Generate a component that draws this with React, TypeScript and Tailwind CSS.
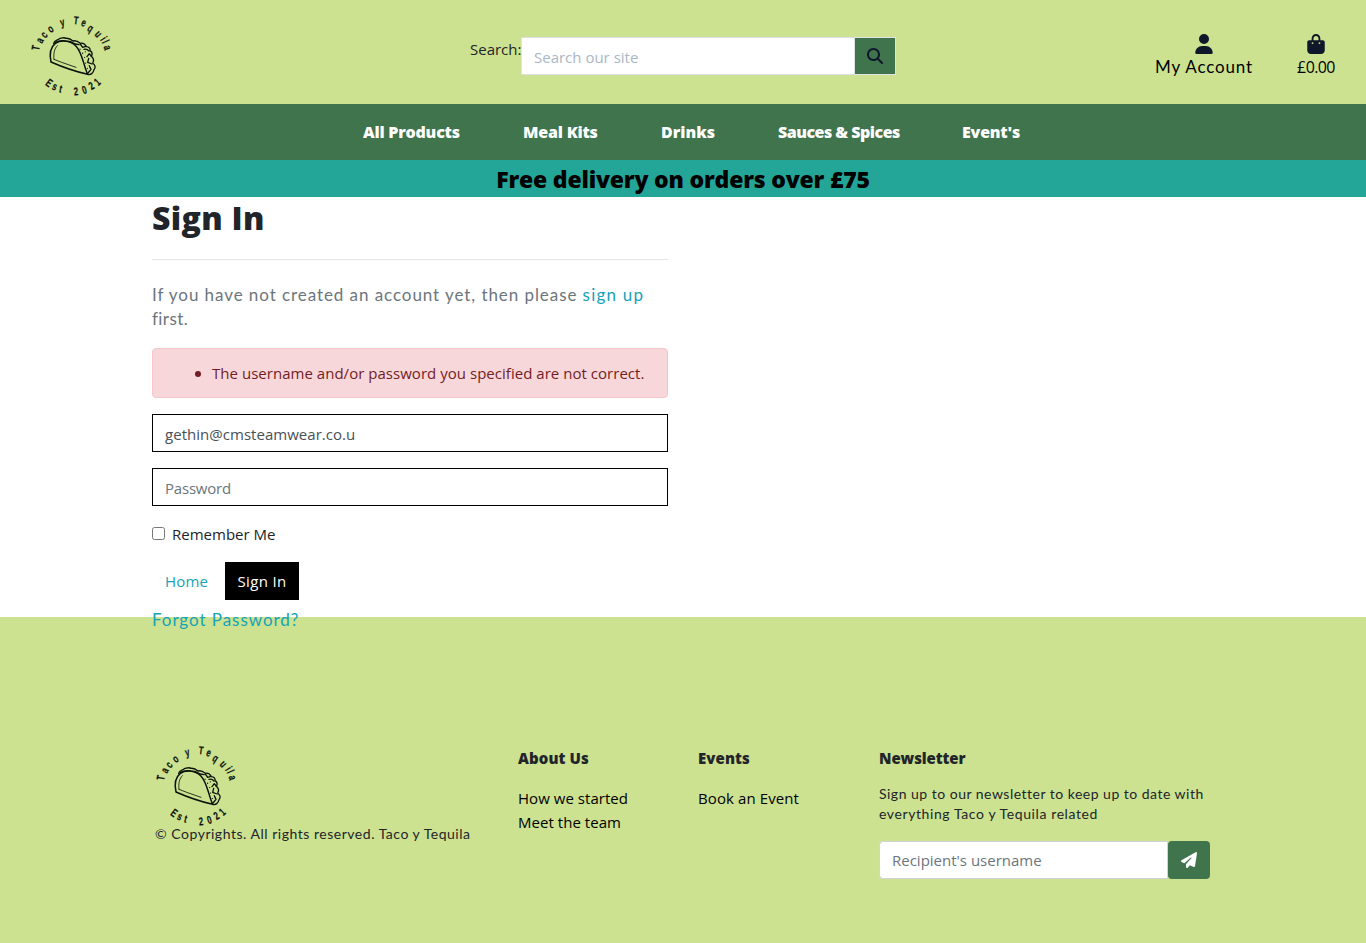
import React from "react";
import { FaUser, FaBagShopping, FaMagnifyingGlass, FaPaperPlane } from "react-icons/fa6";

const ring: [string, number, number, number][] = [
  ["T", 48, 129, -78],
  ["a", 59, 106, -62],
  ["c", 72, 89, -50],
  ["o", 91, 72, -37],
  ["y", 127, 52, -13],
  ["T", 168, 47, 7],
  ["e", 191, 53, 20],
  ["q", 211, 70, 32],
  ["u", 235, 87, 48],
  ["i", 250, 101, 58],
  ["l", 256, 110, 66],
  ["a", 263, 128, 76],
  ["E", 87, 234, 37],
  ["s", 104, 245, 25],
  ["t", 122, 252, 14],
  ["2", 168, 260, -6],
  ["0", 193, 255, -18],
  ["2", 214, 243, -31],
  ["1", 232, 231, -42],
];

function Logo() {
  return (
    <svg viewBox="30 30 246 246" className="block size-[82px] overflow-visible" fill="none" stroke="#0c120a" strokeLinecap="round" strokeLinejoin="round">
      <g fill="#0c120a" stroke="#0c120a" strokeWidth="0.6" fontFamily="'Liberation Sans Narrow', 'Liberation Sans', sans-serif" fontWeight="700" fontSize="34" textAnchor="middle">
        {ring.map(([ch, x, y, a], i) => (
          <text key={i} transform={`translate(${x} ${y}) rotate(${a}) scale(0.68 1)`} y="11">
            {ch}
          </text>
        ))}
      </g>
      <path strokeWidth="4.5" d="M93 171C88 148 91 127 106 115C122 104 150 106 167 122C187 142 190 180 203 208Q150 196 93 171Z" />
      <path strokeWidth="2.5" d="M102 163C100 145 103 131 112 122M102 163L125 172L168 187" />
      <path strokeWidth="4" d="M101 116C102 106 112 107 118 101C127 99 132 96 138 100C146 99 152 102 159 108C168 105 176 111 181 115C190 113 196 119 199 125C208 125 211 131 210 137C218 142 217 149 214 154C221 160 222 168 218 174C226 181 228 188 222 194C220 204 212 211 203 208" />
      <path strokeWidth="4" d="M106 112Q122 105 137 108Q152 108 166 117L177 119M181 117L188 127L198 124M192 133Q201 131 207 138M201 155L208 146L214 154M206 160L203 172L216 177M208 182L213 193L204 204" />
      <path strokeWidth="3" d="M180 132v2M188 144v2M194 157v1M197 174v1M211 188v2M202 190v1M196 140v1" />
    </svg>
  );
}

const seg = "font-['Open_Sans',sans-serif] text-[15px] leading-6";
const round = "font-['Lato',sans-serif] text-[17px] leading-6 whitespace-nowrap";
const heavy = "font-['Open_Sans',sans-serif] font-extrabold whitespace-nowrap";
const footHead = "h-[26px] text-[15px] leading-[27px] text-[#212529]";

export default function App() {
  return (
    <div className="h-[943px] w-full overflow-hidden bg-white text-[#212529]">
      <header className="flex h-[104px] bg-[#cce291]">
        <div className="w-[470px] pt-[15px] pl-[30px]">
          <Logo />
        </div>
        <form className="flex w-[426px] pt-[37px]">
          <label className={`${seg} w-[51px]`} htmlFor="q">Search:</label>
          <div className="flex h-[38px] w-[375px] border border-[#dee2e6]">
            <input id="q" placeholder="Search our site" className={`${seg} h-9 w-[333px] border-r border-[#dee2e6] bg-white px-3 pt-[2px] outline-none placeholder:text-[#a9b7c6]`} />
            <button type="button" className="flex h-9 flex-1 items-center justify-center bg-[#40744d] text-[#0f172a]">
              <FaMagnifyingGlass className="size-4" />
            </button>
          </div>
        </form>
        <nav className="ml-auto flex pt-[34px] text-black">
          <a className="flex w-[98px] flex-col items-center">
            <FaUser className="size-5 text-[#0f172a]" />
            <span className={`${round} mt-px tracking-[0.85px]`}>My Account</span>
          </a>
          <a className="mr-[31px] ml-[44px] flex w-[38px] flex-col items-center">
            <FaBagShopping className="size-5 text-[#0f172a]" />
            <span className="mt-px font-['Open_Sans',sans-serif] text-base leading-6 tracking-[-0.6px]">£0.00</span>
          </a>
        </nav>
      </header>

      <nav className={`${heavy} flex h-14 bg-[#40744d] pt-4 pl-[363px] text-base leading-[25px] tracking-[-0.2px] text-white`}>
        <a className="w-[160px]">All Products</a>
        <a className="w-[138px]">Meal Kits</a>
        <a className="w-[117px] tracking-normal">Drinks</a>
        <a className="w-[184px] tracking-[-0.5px]">Sauces &amp; Spices</a>
        <a>Event's</a>
      </nav>

      <div className={`${heavy} h-[37px] bg-[#23a698] text-center text-[23px] leading-[39px] tracking-[-0.2px] text-black`}>
        Free delivery on orders over £75
      </div>

      <main className="relative ml-[152px] h-[420px] w-[516px]">
        <h1 className={`${heavy} h-[62px] text-[32px] leading-[42px] tracking-[0.3px]`}>Sign In</h1>
        <hr className="border-[#e5e5e5]" />
        <p className={`${round} mt-[23px] mb-[17px] text-[#6c757d]`}>
          <span className="tracking-[0.93px]">If you have not created an account yet, then please </span>
          <a className="tracking-[1.2px] text-[#17a2b8]">sign up</a>
          <br />
          <span className="tracking-[0.4px]">first.</span>
        </p>
        <ul className={`${seg} flex h-[50px] items-center rounded-[4px] border border-[#f5c6cb] bg-[#f8d7da] pl-[42px] text-[#721c24]`}>
          <li className="flex items-center tracking-[0.03px]">
            <span className="mt-0.5 mr-[11px] size-1.5 rounded-full bg-[#721c24]" />
            The username and/or password you specified are not correct.
          </li>
        </ul>
        <input defaultValue="gethin@cmsteamwear.co.u" className={`${seg} mt-4 block h-[38px] w-full border border-black px-3 pt-[2px] tracking-[0.03px] text-[#495057] outline-none`} />
        <input placeholder="Password" className={`${seg} mt-4 block h-[38px] w-full border border-black px-3 pt-[2px] tracking-[-0.2px] outline-none placeholder:text-[#6c757d]`} />
        <label className={`${seg} mt-4 flex items-center`}>
          <input type="checkbox" className="mr-[7px] mb-0.5 size-[13px]" />
          Remember Me
        </label>
        <div className={`${seg} mt-4 flex h-[38px] items-center`}>
          <a className="w-[73px] pl-[13px] tracking-[0.2px] text-[#17a2b8]">Home</a>
          <button type="button" className="h-[38px] w-[74px] bg-black tracking-[0.35px] text-white">Sign In</button>
        </div>
        <a className={`${round} mt-2 block tracking-[0.95px] text-[#17a2b8]`}>Forgot Password?</a>
      </main>

      <footer className="flex h-[326px] bg-[#cce291] pt-[128px] pl-[155px] text-black">
        <div className="w-[363px]">
          <Logo />
          <p className="-mt-px font-['Lato',sans-serif] text-[14px] leading-[15px] tracking-[0.52px] whitespace-nowrap text-[#212529]">
            © Copyrights. All rights reserved. Taco y Tequila
          </p>
        </div>
        <div className="w-[180px]">
          <h2 className={`${heavy} ${footHead} mb-[15px] tracking-[0.1px]`}>About Us</h2>
          <p className={`${seg} tracking-[0.04px]`}>How we started<br />Meet the team</p>
        </div>
        <div className="w-[181px]">
          <h2 className={`${heavy} ${footHead} mb-[15px] tracking-[0.1px]`}>Events</h2>
          <p className={`${seg} tracking-[0.1px]`}>Book an Event</p>
        </div>
        <div className="w-[331px]">
          <h2 className={`${heavy} ${footHead} mb-[13px] tracking-[-0.1px]`}>Newsletter</h2>
          <p className="font-['Lato',sans-serif] text-[14px] leading-5 tracking-[0.49px] whitespace-nowrap text-[#212529]">
            Sign up to our newsletter to keep up to date with
            <br />
            <span className="tracking-[0.6px]">everything Taco y Tequila related</span>
          </p>
          <div className="mt-[17px] flex h-[38px]">
            <input placeholder="Recipient's username" className={`${seg} h-[38px] w-[289px] rounded-l-[4px] border border-[#ced4da] bg-white px-3 outline-none placeholder:text-[#6c757d]`} />
            <button type="button" className="flex w-[42px] items-center justify-center rounded-[4px] bg-[#40744d] text-white">
              <FaPaperPlane className="size-4" />
            </button>
          </div>
        </div>
      </footer>
    </div>
  );
}
